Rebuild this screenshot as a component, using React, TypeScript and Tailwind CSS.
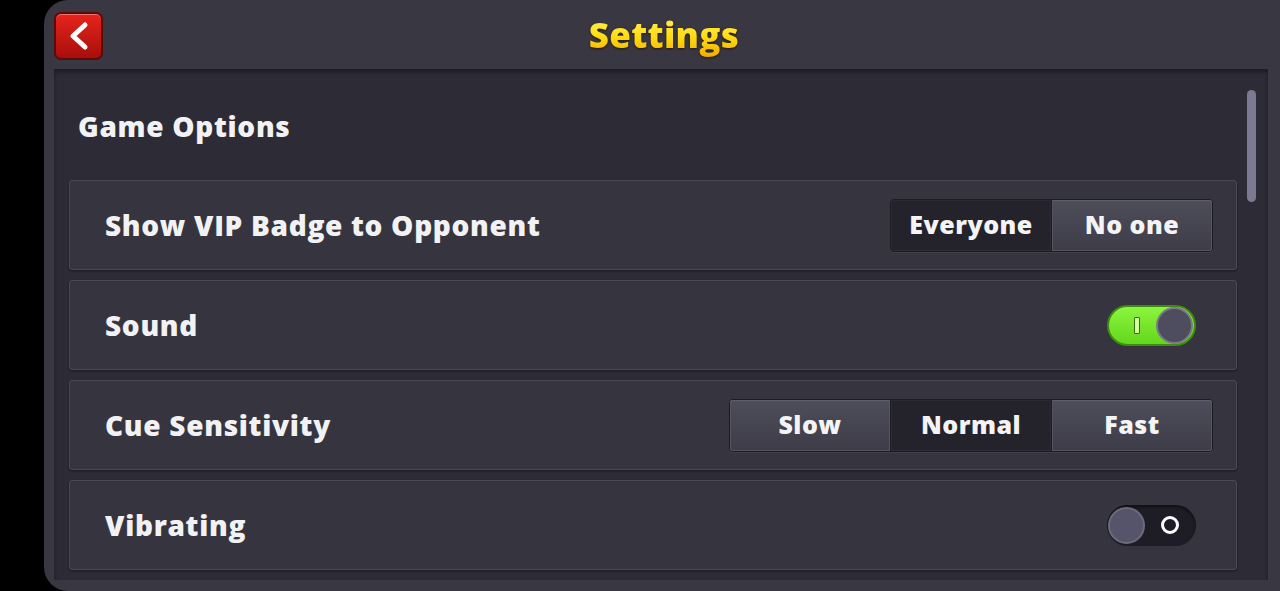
import { ReactNode } from "react";

const FONT = { fontFamily: '"Open Sans", "Noto Sans", sans-serif' };

function Segmented({ options, active }: { options: string[]; active: string }) {
  return (
    <div className="flex rounded-[4px] border border-[#1d1c24] bg-[#1d1c24] shadow-[0_1px_0_rgba(255,255,255,0.06)]">
      {options.map((o, i) => (
        <div
          key={o}
          className={
            "flex h-[51px] w-[160px] items-center justify-center text-[25px] font-extrabold tracking-[0.5px] text-[#f4f4f6] " +
            (i > 0 ? "ml-px " : "") +
            (o === active
              ? "bg-[#24232c] shadow-[inset_0_0_0_1px_#2c2b35]"
              : "bg-gradient-to-b from-[#4e4d5a] to-[#3d3c48] shadow-[inset_0_1px_0_#5f5e6c,inset_0_0_0_1px_#55545f]") +
            (i === 0 ? " rounded-l-[3px]" : "") +
            (i === options.length - 1 ? " rounded-r-[3px]" : "")
          }
        >
          {o}
        </div>
      ))}
    </div>
  );
}

function Toggle({ on }: { on: boolean }) {
  if (on) {
    return (
      <div className="mr-[17px] flex h-[41px] w-[89px] items-center rounded-full border-2 border-[#3f8a12] bg-gradient-to-b from-[#8af53c] to-[#62d81a] pr-[1px]">
        <div className="ml-[25px] h-[17px] w-[6px] rounded-[1px] border border-[#356f10] bg-[#d8ff9c]" />
        <div className="ml-auto h-[37px] w-[37px] rounded-full border-2 border-[#7a7b86] bg-[#4e4d60]" />
      </div>
    );
  }
  return (
    <div className="mr-[17px] flex h-[41px] w-[89px] items-center rounded-full bg-[#1e1d25] pl-[1px] shadow-[inset_0_2px_3px_rgba(0,0,0,0.5)]">
      <div className="h-[37px] w-[37px] rounded-full border-2 border-[#6c6b7c] bg-[#55546a]" />
      <div className="ml-[16px] h-[18px] w-[18px] rounded-full border-[3px] border-white" />
    </div>
  );
}

function Row({ label, children }: { label: string; children: ReactNode }) {
  return (
    <div className="flex h-[90px] items-center rounded-[3px] border border-[#4a4955] bg-[#36353f] pl-[35px] pr-[23px] shadow-[0_1px_2px_rgba(0,0,0,0.4)]">
      <span className="text-[28px] font-extrabold tracking-[0.7px] text-[#f2f2f4]">{label}</span>
      <div className="ml-auto flex items-center">{children}</div>
    </div>
  );
}

export default function App() {
  return (
    <div className="flex h-[591px] w-full overflow-hidden bg-black pl-[44px]" style={FONT}>
      <div className="flex flex-1 flex-col rounded-l-[24px] bg-[#383742] pb-[11px]">
        {/* Header */}
        <div className="relative flex h-[69px] items-center justify-center">
          <div className="absolute left-[10px] top-[12px] flex h-[48px] w-[49px] items-center justify-center rounded-[7px] border-2 border-[#5a0b0b] bg-gradient-to-b from-[#e8241c] to-[#a80e0c] shadow-[inset_0_1px_0_rgba(255,255,255,0.35)]">
            <svg width="26" height="30" viewBox="0 0 26 30">
              <path d="M19 4 L7 15 L19 26" fill="none" stroke="#fff" strokeWidth="5" strokeLinecap="round" strokeLinejoin="round" />
            </svg>
          </div>
          <h1 className="ml-[4px] mt-[2px] bg-gradient-to-b from-[#fff45c] via-[#ffde12] to-[#eca400] bg-clip-text text-[35px] font-extrabold tracking-[0.3px] text-transparent [filter:drop-shadow(0_1px_1px_rgba(40,20,0,0.9))]">
            Settings
          </h1>
        </div>

        {/* Content panel */}
        <div className="relative ml-[10px] mr-[12px] flex-1 overflow-hidden bg-[#2c2b36] pl-[15px] pr-[31px] shadow-[inset_0_3px_4px_rgba(0,0,0,0.35)]">
          <div className="flex h-[111px] items-center pl-[9px] pt-[3px]">
            <span className="text-[28px] font-extrabold tracking-[0.7px] text-[#f2f2f4]">Game Options</span>
          </div>
          <div className="flex flex-col gap-[10px]">
            <Row label="Show VIP Badge to Opponent">
              <Segmented options={["Everyone", "No one"]} active="Everyone" />
            </Row>
            <Row label="Sound">
              <Toggle on />
            </Row>
            <Row label="Cue Sensitivity">
              <Segmented options={["Slow", "Normal", "Fast"]} active="Normal" />
            </Row>
            <Row label="Vibrating">
              <Toggle on={false} />
            </Row>
          </div>
          <div className="absolute right-[12px] top-[21px] h-[112px] w-[9px] rounded-full bg-[#7b7a92]" />
        </div>
      </div>
    </div>
  );
}
